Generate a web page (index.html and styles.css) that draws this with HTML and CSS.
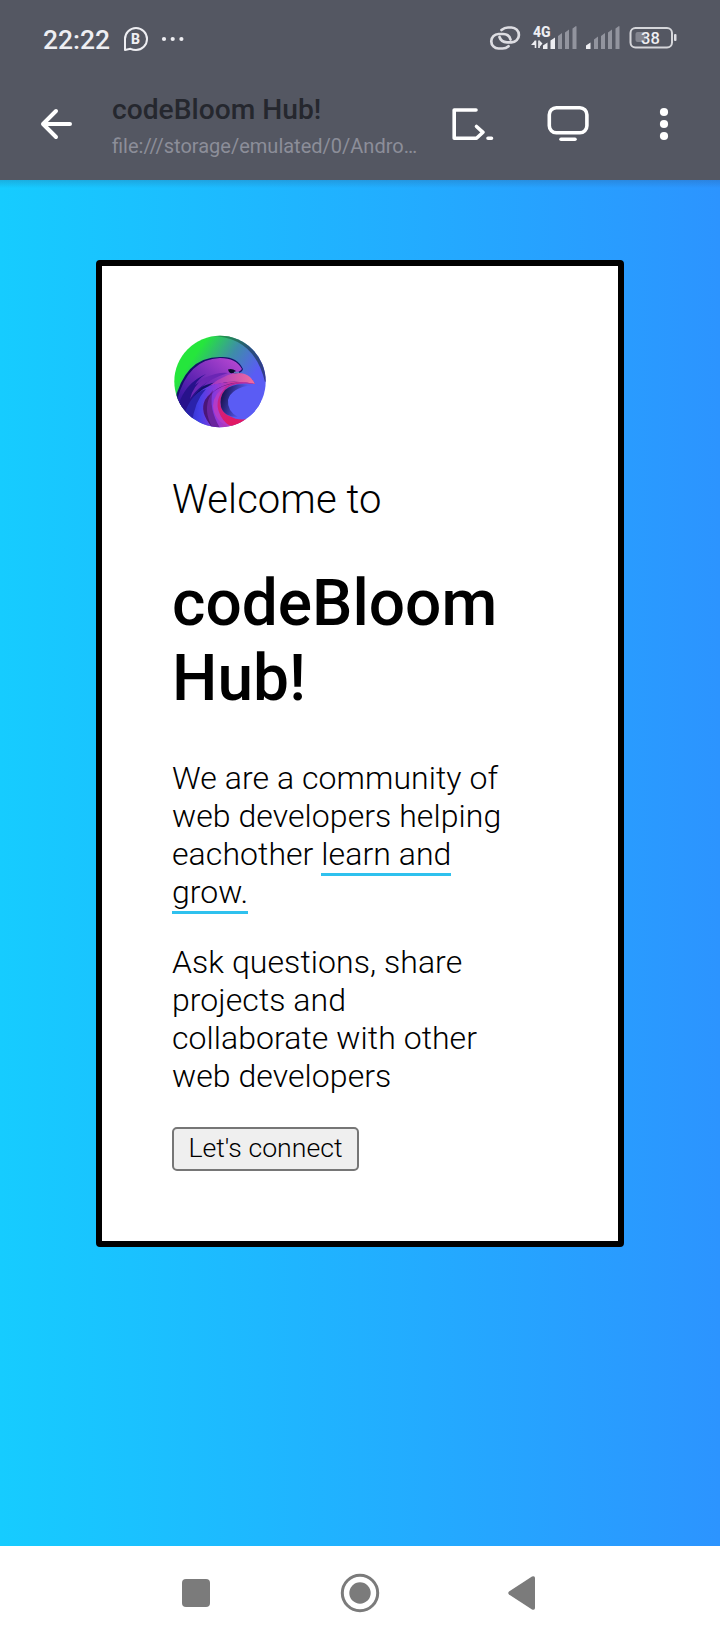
FILE: index.html
```html
<!DOCTYPE html>
<html lang="en">
<head>
<meta charset="utf-8">
<title>codeBloom Hub!</title>
<link rel="stylesheet" href="styles.css">
</head>
<body>
<header class="top">
  <div class="status">
    <span class="clock">22:22</span>
    <svg class="chat" width="26" height="26" viewBox="0 0 26 26"><path d="M2 24V13A11 11 0 1 1 13 24Q10 24 7.500 22.800Z" fill="none" stroke="#eeeef2" stroke-width="2" stroke-linejoin="round"/><text x="8" y="18" class="chat-letter">B</text></svg>
    <svg class="more" width="24" height="6" viewBox="0 0 24 6" fill="#eeeef2"><circle cx="3" cy="3" r="2.100"/><circle cx="11.700" cy="3" r="2.100"/><circle cx="20.400" cy="3" r="2.100"/></svg>
    <svg class="signals" width="190" height="28" viewBox="0 0 190 28">
      <g fill="none" stroke="#dddde2" stroke-width="2.700" stroke-linecap="round">
        <path d="M12.500 5Q15.500 2.500 19 2.500H22.500A7.300 7.300 0 0 1 22.500 17.300H18Q12 17 10.500 12"/>
        <path d="M21.500 14.500Q20 9 14 9H9.500A7.200 7.200 0 0 0 9.500 23.500H13.500Q17 23.500 19.500 21.200"/>
      </g>
      <text x="44" y="12" class="net">4G</text>
      <path d="M46.500 15.500V23M50 15.500V23" stroke="#eeeef2" stroke-width="1.600"/>
      <path d="M46 15.500L42 20H46ZM50.500 22L53.500 18.500L50.500 15.500Z" fill="#eeeef2"/>
      <g fill="#92949e">
        <path d="M69 11l4-3v16h-4zM76 7.500l4-3V24h-4zM83.500 3.500l3.500-2.500q.5 0 .5 1V24h-4z"/>
        <path d="M105 14.500l4-3V24h-4zM112 11l4-3v16h-4zM119 7.500l4-3V24h-4zM126.500 3.500l3.500-2.500q.5 0 .5 1V24h-4z"/>
      </g>
      <path d="M54 20.500l4.500-3V24H54zM61.500 15.500l4.500-3V24h-4.500zM97 20.500l4.500-3V24H97z" fill="#eeeef2"/>
      <rect x="141.500" y="3" width="41.500" height="19.500" rx="5" fill="none" stroke="#d5d6da" stroke-width="2"/>
      <rect x="146.500" y="7" width="10" height="10" rx="2" fill="#83858f"/>
      <rect x="185" y="9" width="2.500" height="7" rx="1" fill="#dddde2"/>
      <text x="152" y="19" class="level">38</text>
    </svg>
  </div>
  <div class="bar">
    <svg class="back" width="34" height="34" viewBox="0 0 34 34" fill="none" stroke="#fff" stroke-width="4" stroke-linecap="round" stroke-linejoin="round"><path d="M17 4L4 17L17 30M4 17H31"/></svg>
    <div class="page-id">
      <div class="page-title">codeBloom Hub!</div>
      <div class="page-url">file:///storage/emulated/0/Andro…</div>
    </div>
    <svg class="tools" width="230" height="40" viewBox="0 0 230 40">
      <g fill="none" stroke="#fff" stroke-width="3.600" stroke-linecap="round" stroke-linejoin="round">
        <path d="M24 6H2.200V34.300H24.500L31 28.300L24.500 22.500M36 34.300H39.500"/>
        <rect x="97.300" y="3.700" width="37.600" height="25" rx="7"/>
        <path d="M109 35.200H123"/>
      </g>
      <g fill="#fff"><circle cx="212" cy="8" r="4.100"/><circle cx="212" cy="20" r="4.100"/><circle cx="212" cy="32" r="4.100"/></g>
    </svg>
  </div>
</header>
<main class="stage">
  <section class="card">
    <svg class="logo" width="120" height="120" viewBox="0 0 120 120">
      <defs>
        <linearGradient id="sky" x1=".1" y1=".15" x2=".75" y2=".6"><stop offset=".18" stop-color="#25e63c"/><stop offset=".6" stop-color="#3e8caa"/><stop offset="1" stop-color="#5a5cf4"/></linearGradient>
        <linearGradient id="head" x1="0" y1="1" x2="1" y2="0"><stop offset="0" stop-color="#23109a"/><stop offset=".45" stop-color="#6426b4"/><stop offset="1" stop-color="#c14bd5"/></linearGradient>
        <linearGradient id="beak"><stop offset="0" stop-color="#9c32c4"/><stop offset="1" stop-color="#f36d9f"/></linearGradient>
        <linearGradient id="wave" gradientUnits="userSpaceOnUse" x1="22" y1="95" x2="72" y2="95"><stop offset="0" stop-color="#292bb8"/><stop offset=".35" stop-color="#4440e8"/><stop offset=".7" stop-color="#9238d8"/><stop offset="1" stop-color="#cc379e"/></linearGradient>
        <linearGradient id="pink" gradientUnits="userSpaceOnUse" x1="60" y1="64" x2="75" y2="106"><stop offset="0" stop-color="#b52a9c"/><stop offset=".5" stop-color="#d0207f"/><stop offset="1" stop-color="#e4185f"/></linearGradient>
        <linearGradient id="hollow" gradientUnits="userSpaceOnUse" x1="62" y1="78" x2="82" y2="84"><stop offset="0" stop-color="#1d1658"/><stop offset=".3" stop-color="#2b2a86"/><stop offset="1" stop-color="#5659ea"/></linearGradient>
        <linearGradient id="rim" x1="0" y1="0" x2="1" y2="1"><stop offset="0" stop-color="#20a83e"/><stop offset=".5" stop-color="#294e7b"/><stop offset="1" stop-color="#34348f"/></linearGradient>
        <clipPath id="disc"><circle cx="60" cy="61.500" r="45.700"/></clipPath>
      </defs>
      <g clip-path="url(#disc)">
        <rect x="14" y="15" width="92" height="93" fill="url(#sky)"/>
        <path d="M50 16Q94 16 105 62L108 60V14H50Z" fill="url(#rim)"/>
        <path d="M14 84Q24 37 60 37Q77 36 83 49Q82 53 77 53Q90 54 95 64Q78 59 63 67Q38 73 31 108H14Z" fill="#15116a"/>
        <path d="M17 80Q28 39 60 38Q76 38 82 49Q79 53 73 53L83 57Q70 61 59 62Q31 65 20 91Z" fill="url(#head)"/>
        <path d="M18 86Q25 63 46 54Q38 59 35 65Q46 57 60 54Q38 64 25 93Z" fill="#27128b"/>
        <path d="M44 58Q58 52 68 53Q52 58 42 66Q35 71 30 79Q33 66 44 58Z" fill="#6a26b4"/>
        <path d="M68 55Q82 50 90 57Q94 61 95 64Q81 61 67 62L49 66Q58 59 68 55Z" fill="url(#beak)"/>
        <path d="M24 98Q33 66 61 63Q78 60 94 64Q74 63 65 77Q57 91 72 99Q82 103 100 96L92 110H24Z" fill="url(#wave)"/>
        <path d="M25 92Q32 73 46 69Q34 82 32 104Z" fill="#2a22aa"/>
        <path d="M52 108Q38 86 53 70Q48 88 60 108Z" fill="#69249d"/>
        <path d="M52 73Q62 63 84 62Q58 64 50 76Q43 90 52 107Q39 92 45 80Q48 75 52 73Z" fill="#4b1678"/>
        <path d="M94 64Q72 59 60 71Q50 84 60 98Q66 106 77 107L94 106L100 96Q80 103 70 96Q60 88 66 76Q73 63 94 64Z" fill="url(#pink)"/>
        <path d="M66 67Q54 79 59 92Q62 101 71 107Q54 102 53 86Q54 72 66 67Z" fill="#b33bc8"/>
        <path d="M94 64Q74 62 66 69Q59 77 61 87Q65 98 79 97Q92 98 101 92V66Z" fill="#5a5cf4"/>
        <path d="M92 65Q74 62 65 70Q59 77 61 87Q64 97 78 97Q67 91 68 80Q71 68 92 65Z" fill="url(#hollow)"/>
        <path d="M68 49.500Q72 48 76 51Q72 55 69 52Z" fill="#080c2c"/>
        <path d="M74 52.500H79" stroke="#6577bd" stroke-width="1.300"/>
      </g>
    </svg>
    <p class="welcome">Welcome to</p>
    <h1 class="title">codeBloom Hub!</h1>
    <p class="copy">We are a community of web developers helping eachother <span class="mark">learn and grow.</span></p>
    <p class="copy">Ask questions, share projects and collaborate with other web developers</p>
    <button class="connect" type="button">Let's connect</button>
  </section>
</main>
<footer class="nav">
  <svg class="nav-icons" width="356" height="42" viewBox="0 0 356 42" fill="#7b7b7b">
    <rect x="0" y="7" width="28" height="28" rx="4"/>
    <circle cx="178" cy="21" r="17.700" fill="none" stroke="#7b7b7b" stroke-width="3"/><circle cx="178" cy="21" r="10.700"/>
    <path d="M327 19.500Q325.500 21 327 22.500L350 37.500Q353 38.500 353 36V6Q353 3.500 350 4.500Z"/>
  </svg>
</footer>
</body>
</html>
```
FILE: styles.css
```css
* { box-sizing: border-box; }
body {
  margin: 0;
  width: 720px;
  height: 1640px;
  display: flex;
  flex-direction: column;
  font-family: Roboto, "Liberation Sans", sans-serif;
  color: #000;
}
svg { display: block; flex: none; }
.top { height: 180px; background: #545762; }
.status {
  height: 78px;
  display: flex;
  align-items: center;
  padding: 1px 41px 0 43px;
}
.clock {
  width: 80px;
  font-size: 26.4px;
  font-weight: 500;
  color: #eeeef2;
}
.chat { margin-bottom: 1px; }
.chat-letter { font-size: 14px; font-weight: 800; fill: #eeeef2; }
.more { margin: 0 0 1px 12px; }
.signals { margin: 0 0 1px auto; }
.net { font-size: 14px; font-weight: 800; fill: #eeeef2; }
.level { font-size: 16.5px; font-weight: 500; fill: #eeeef2; }
.bar {
  height: 102px;
  display: flex;
  align-items: flex-start;
  padding: 15px 0 0 39px;
}
.back { margin-top: 14px; }
.page-id { width: 340px; margin-left: 39px; white-space: nowrap; }
.page-title {
  font-size: 28.2px;
  line-height: 33px;
  font-weight: 500;
  color: #25272e;
}
.page-url {
  margin-top: 8px;
  font-size: 20px;
  line-height: 24px;
  color: #8c8e99;
}
.tools { margin-top: 11px; }
.stage {
  height: 1366px;
  padding: 80px 96px 0;
  background:
    linear-gradient(to bottom, rgba(40, 60, 100, 0.2), transparent 8px),
    linear-gradient(to right, #16ccff, #2c94ff);
}
.card {
  height: 987px;
  padding: 64px 70px 0;
  background: #fff;
  border: 6px solid #000;
  border-radius: 4px;
}
.logo { margin: -10px 0 0 -12px; }
.welcome {
  margin: 36px 0 0;
  font-size: 40px;
  line-height: 47px;
  font-weight: 300;
  letter-spacing: 0.08px;
}
.title {
  margin: 43px 0 0;
  font-size: 64px;
  line-height: 75px;
  font-weight: 500;
}
.copy {
  width: 334px;
  margin: 0 0 32px;
  font-size: 32px;
  line-height: 38px;
  font-weight: 300;
  letter-spacing: 0.06px;
}
.title + .copy { margin-top: 43px; }
.mark { border-bottom: 3px solid #2fc1ee; }
.connect {
  display: block;
  width: 187px;
  height: 44px;
  padding: 0 0 2px;
  border: 2px solid #767676;
  border-radius: 5px;
  background: #efefef;
  color: #000;
  font: 300 26.7px Roboto, sans-serif;
}
.nav {
  height: 94px;
  background: #fff;
  padding: 26px 0 0 182px;
}
```
